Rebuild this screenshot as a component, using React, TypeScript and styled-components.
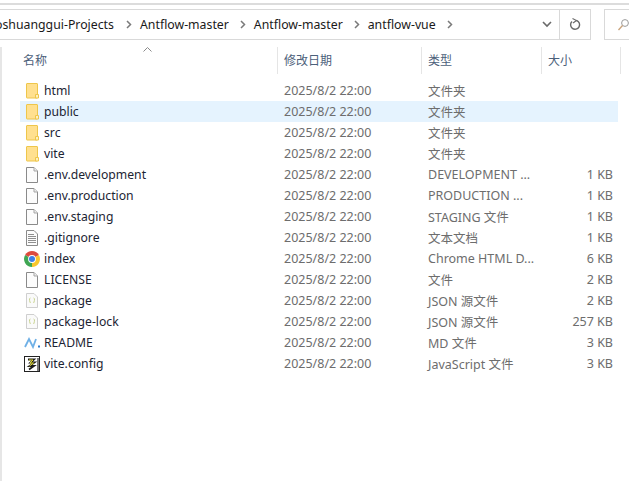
import React from "react";
import styled, { createGlobalStyle } from "styled-components";

const Global = createGlobalStyle`
  html, body { margin: 0; padding: 0; background: #fff; width: 629px; height: 481px; overflow: hidden; }
  * { box-sizing: border-box; }
`;

const Window = styled.div`
  width: 629px;
  height: 481px;
  background: #fff;
  overflow: hidden;
  font-family: "Noto Sans", "Noto Sans CJK SC", sans-serif;
  font-size: 12.5px;
  display: flex;
  flex-direction: column;
`;
const TopRule = styled.div`
  height: 2px;
  margin-top: 3px;
  background: #dcdcdc;
  flex: none;
`;
const NavBar = styled.div`
  display: flex;
  height: 31px;
  margin-top: 4px;
  flex: none;
  gap: 13px;
`;
const AddressBox = styled.div`
  width: 593px;
  display: flex;
  border: 1px solid #d9d9d9;
  border-left: none;
  overflow: hidden;
`;
const Crumbs = styled.div`
  flex: 1;
  display: flex;
  align-items: center;
  color: #1a1a1a;
  white-space: nowrap;
  overflow: hidden;
  font-size: 12.3px;
`;
const LeadCrumb = styled.span`
  margin-left: -5px;
  width: 120px;
  flex: none;
`;
const Crumb = styled.span``;
const Chevron = styled.svg`
  margin: 0 8px 0 11px;
  flex: none;
`;
const DropButton = styled.div`
  width: 24px;
  display: flex;
  align-items: center;
  justify-content: center;
`;
const RefreshButton = styled.div`
  width: 31px;
  border-left: 1px solid #d9d9d9;
  display: flex;
  align-items: center;
  justify-content: center;
`;
const SearchBox = styled.div`
  flex: 1;
  border: 1px solid #d9d9d9;
  border-right: none;
  display: flex;
  align-items: center;
  padding-left: 13px;
`;
const Body = styled.div`
  flex: 1;
  display: flex;
  margin-top: 7px;
`;
const SideRule = styled.div`
  width: 2px;
  background: #e6e6e6;
  flex: none;
`;
const List = styled.div`
  flex: 1;
  position: relative;
  padding-left: 18px;
`;
const SortCaret = styled.svg`
  position: absolute;
  left: 141px;
  top: 0;
`;
const Header = styled.div`
  display: grid;
  grid-template-columns: 257px 144px 120px 80px;
  height: 27px;
  margin-bottom: 6px;
`;
const HeaderCell = styled.div<{ $first?: boolean }>`
  color: #4c607a;
  font-size: 12px;
  padding: 4px 0 0 ${(p) => (p.$first ? 3 : 6)}px;
  border-left: ${(p) => (p.$first ? "none" : "1px solid #e5e5e5")};
  line-height: 20px;
`;
const HeaderEnd = styled.div`
  width: 1px;
  height: 27px;
  background: #e5e5e5;
  position: absolute;
  left: 618px;
  top: 0;
`;
const Row = styled.div<{ $selected?: boolean }>`
  display: grid;
  grid-template-columns: 257px 144px 120px 72px;
  height: 21px;
  align-items: center;
  background: ${(p) => (p.$selected ? "#e5f3fe" : "transparent")};
  width: 598px;
`;
const NameCell = styled.div`
  display: flex;
  align-items: center;
  color: #1c2433;
  padding-left: 6px;
  white-space: nowrap;
  font-size: 12.2px;
`;
const IconSlot = styled.div`
  width: 18px;
  height: 18px;
  display: flex;
  align-items: center;
  justify-content: flex-start;
  flex: none;
`;
const DateCell = styled.div`
  color: #6d6d6d;
  padding-left: 7px;
  white-space: nowrap;
`;
const TypeCell = styled.div`
  color: #6d6d6d;
  padding-left: 7px;
  white-space: nowrap;
  overflow: hidden;
`;
const SizeCell = styled.div`
  color: #6d6d6d;
  text-align: right;
  white-space: nowrap;
`;

const FolderIcon = () => (
  <svg width="13" height="16" viewBox="0 0 13 16">
    <rect x="0.5" y="0.5" width="11" height="14.5" rx="0.5" fill="#ffe08f" stroke="#eec64b" />
    <path d="M9.5 15 V11.5 H12.5 V15 Z" fill="#fff0c0" stroke="#eec64b" />
  </svg>
);
const FileIcon = () => (
  <svg width="12" height="16" viewBox="0 0 12 16">
    <path d="M0.5 0.5 H8 L11.5 4 V15.5 H0.5 Z" fill="#fcfcfc" stroke="#8a8a8a" />
    <path d="M8 0.5 V4 H11.5" fill="#eee" stroke="#a5a5a5" />
  </svg>
);
const TextIcon = () => (
  <svg width="12" height="16" viewBox="0 0 12 16">
    <path d="M0.5 0.5 H8 L11.5 4 V15.5 H0.5 Z" fill="#fcfcfc" stroke="#8a8a8a" />
    <path d="M2 4.5 H8 M2 6.5 H10 M2 8.5 H10 M2 10.5 H10 M2 12.5 H10" stroke="#8f8f8f" />
  </svg>
);
const ChromeIcon = () => (
  <svg width="16" height="16" viewBox="0 0 16 16" style={{ marginLeft: -2 }}>
    <path d="M8 8 L1.1 4 A8 8 0 0 1 14.9 4 Z" fill="#dd4b3e" />
    <path d="M8 8 L14.9 4 A8 8 0 0 1 8 16 Z" fill="#f8c72d" />
    <path d="M8 8 L8 16 A8 8 0 0 1 1.1 4 Z" fill="#3fa653" />
    <circle cx="8" cy="8" r="3.9" fill="#fff" />
    <circle cx="8" cy="8" r="3" fill="#3f7fe6" />
  </svg>
);
const JsonIcon = () => (
  <svg width="12" height="15" viewBox="0 0 12 15">
    <path d="M0.5 0.5 H8 L11.5 4 V14.5 H0.5 Z" fill="#fafafa" stroke="#cfcfcf" />
    <path d="M4.5 5 Q3 5 3.6 7.5 Q4 9.5 4.5 10 M7.5 5 Q9 5 8.4 7.5 Q8 9.5 7.5 10" fill="none" stroke="#c9d48f" />
  </svg>
);
const MdIcon = () => (
  <svg width="16" height="12" viewBox="0 0 16 12" style={{ marginLeft: -2 }}>
    <path d="M1 10 L5 2 L9 10 L12 2" fill="none" stroke="#6fb0e6" strokeWidth="1.8" />
    <rect x="14" y="8.5" width="2" height="2" fill="#2f7fd0" />
  </svg>
);
const JsIcon = () => (
  <svg width="16" height="16" viewBox="0 0 16 16" style={{ marginLeft: -2 }}>
    <rect x="0.5" y="0.5" width="15" height="15" fill="#fff" stroke="#222" />
    <rect x="13" y="2" width="2" height="13" fill="#777" />
    <path d="M4 3.5 H10 L6.5 6.5 H10.5 L5.5 10 H10 L5 13.5" fill="none" stroke="#1c1c1c" strokeWidth="1.8" />
    <path d="M5 4 H9 L6 7 H9.5 L5.5 10" fill="none" stroke="#e3dc2a" strokeWidth="1" />
  </svg>
);

type Kind = "folder" | "file" | "text" | "chrome" | "json" | "md" | "js";
const icons: Record<Kind, React.FC> = {
  folder: FolderIcon,
  file: FileIcon,
  text: TextIcon,
  chrome: ChromeIcon,
  json: JsonIcon,
  md: MdIcon,
  js: JsIcon,
};

const rows: { name: string; kind: Kind; type: string; size: string; selected?: boolean }[] = [
  { name: "html", kind: "folder", type: "文件夹", size: "" },
  { name: "public", kind: "folder", type: "文件夹", size: "", selected: true },
  { name: "src", kind: "folder", type: "文件夹", size: "" },
  { name: "vite", kind: "folder", type: "文件夹", size: "" },
  { name: ".env.development", kind: "file", type: "DEVELOPMENT ...", size: "1 KB" },
  { name: ".env.production", kind: "file", type: "PRODUCTION ...", size: "1 KB" },
  { name: ".env.staging", kind: "file", type: "STAGING 文件", size: "1 KB" },
  { name: ".gitignore", kind: "text", type: "文本文档", size: "1 KB" },
  { name: "index", kind: "chrome", type: "Chrome HTML D...", size: "6 KB" },
  { name: "LICENSE", kind: "file", type: "文件", size: "2 KB" },
  { name: "package", kind: "json", type: "JSON 源文件", size: "2 KB" },
  { name: "package-lock", kind: "json", type: "JSON 源文件", size: "257 KB" },
  { name: "README", kind: "md", type: "MD 文件", size: "3 KB" },
  { name: "vite.config", kind: "js", type: "JavaScript 文件", size: "3 KB" },
];

const Sep = () => (
  <Chevron width="6" height="9" viewBox="0 0 6 9">
    <path d="M1 1 L4.5 4.5 L1 8" fill="none" stroke="#7a7a7a" strokeWidth="1.5" />
  </Chevron>
);

export default function App() {
  return (
    <Window>
      <Global />
      <TopRule />
      <NavBar>
        <AddressBox>
          <Crumbs>
            <LeadCrumb>oshuanggui-Projects</LeadCrumb>
            <Sep />
            <Crumb>Antflow-master</Crumb>
            <Sep />
            <Crumb>Antflow-master</Crumb>
            <Sep />
            <Crumb>antflow-vue</Crumb>
            <Sep />
          </Crumbs>
          <DropButton>
            <svg width="10" height="7" viewBox="0 0 10 7">
              <path d="M1 1 L5 5 L9 1" fill="none" stroke="#6a6a6a" strokeWidth="1.6" />
            </svg>
          </DropButton>
          <RefreshButton>
            <svg width="12" height="13" viewBox="0 0 12 13">
              <path d="M7.5 2.5 A4.5 4.5 0 1 1 3 3.5" fill="none" stroke="#6a6a6a" strokeWidth="1.4" />
              <path d="M3.5 0.5 L7.5 2.5 L4 5" fill="none" stroke="#6a6a6a" strokeWidth="1.1" />
            </svg>
          </RefreshButton>
        </AddressBox>
        <SearchBox>
          <svg width="11" height="12" viewBox="0 0 11 12">
            <circle cx="7" cy="4" r="3.4" fill="none" stroke="#9a9a9a" />
            <path d="M4.5 6.5 L0.5 11" stroke="#c9a27a" strokeWidth="1.3" />
          </svg>
        </SearchBox>
      </NavBar>
      <Body>
        <SideRule />
        <List>
          <SortCaret width="9" height="5" viewBox="0 0 9 5">
            <path d="M0.5 4.5 L4.5 0.5 L8.5 4.5" fill="none" stroke="#8a8a8a" />
          </SortCaret>
          <Header>
            <HeaderCell $first>名称</HeaderCell>
            <HeaderCell>修改日期</HeaderCell>
            <HeaderCell>类型</HeaderCell>
            <HeaderCell>大小</HeaderCell>
          </Header>
          <HeaderEnd />
          {rows.map((r) => {
            const Icon = icons[r.kind];
            return (
              <Row key={r.name} $selected={r.selected}>
                <NameCell>
                  <IconSlot>
                    <Icon />
                  </IconSlot>
                  {r.name}
                </NameCell>
                <DateCell>2025/8/2 22:00</DateCell>
                <TypeCell>{r.type}</TypeCell>
                <SizeCell>{r.size}</SizeCell>
              </Row>
            );
          })}
        </List>
      </Body>
    </Window>
  );
}
